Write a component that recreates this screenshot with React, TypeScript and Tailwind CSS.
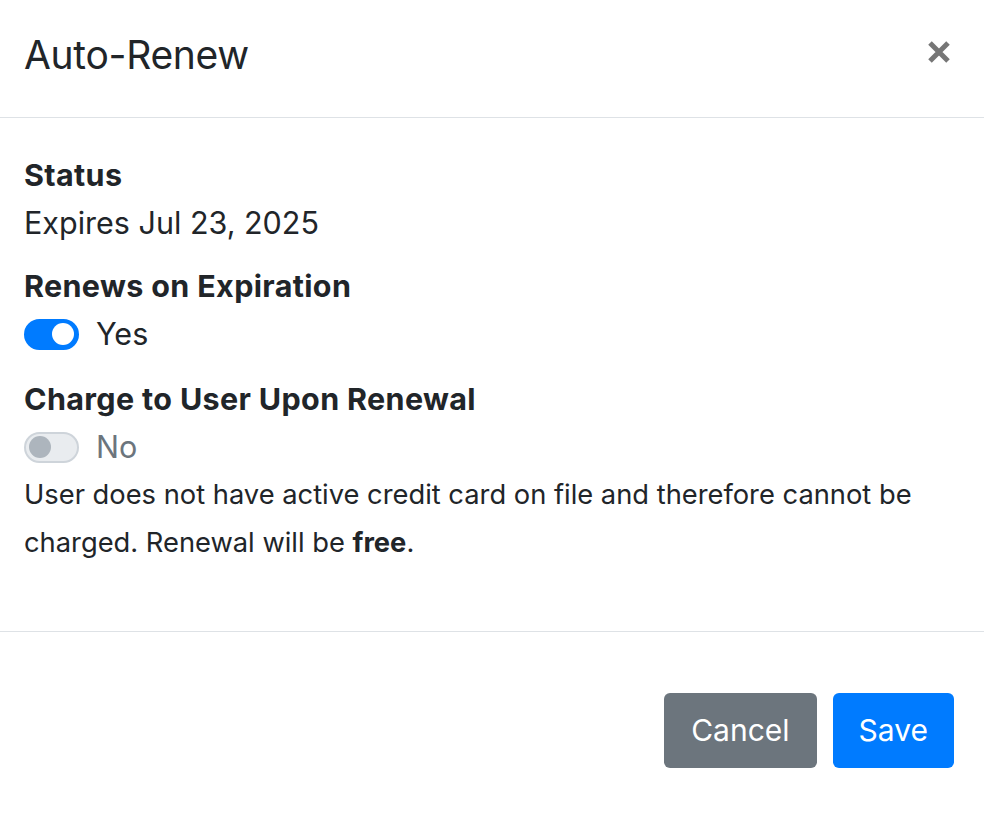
import { useState } from "react";

function Toggle({ on }: { on: boolean }) {
  return (
    <span
      className={`relative inline-flex items-center w-[55px] h-[31px] rounded-full border-2 ${
        on ? "bg-[#007bff] border-[#007bff]" : "bg-[#e9ecef] border-[#ced4da]"
      }`}
    >
      <span
        className={`absolute top-1/2 -translate-y-1/2 rounded-full w-[22px] h-[22px] ${
          on ? "right-[3px] bg-white" : "left-[3px] bg-[#adb5bd]"
        }`}
      ></span>
    </span>
  );
}

export default function App() {
  const [renews] = useState(true);
  const [charge] = useState(false);

  return (
    <div
      className="w-[984px] h-[822px] bg-white text-[#212529] overflow-hidden"
      style={{ fontFamily: "Inter, 'Noto Sans', sans-serif" }}
    >
      {/* Header */}
      <div className="flex items-start justify-between h-[118px] pl-6 pr-[33px] pt-[25px] border-b border-[#dee2e6]">
        <h5 className="text-[39px] leading-[60px] font-normal tracking-[-0.3px]">Auto-Renew</h5>
        <button className="mt-[15px] w-[24px] h-[24px] text-[#767676]" aria-label="Close">
          <svg viewBox="0 0 24 24" width="24" height="24">
            <path d="M3 3 L21 21 M21 3 L3 21" stroke="currentColor" strokeWidth="5" strokeLinecap="butt" />
          </svg>
        </button>
      </div>

      {/* Body */}
      <div className="px-6 pt-[33px] pb-[64px] text-[30.5px] leading-[48px]">
        <div className="font-bold tracking-[0.35px]">Status</div>
        <div className="mb-[15px]">Expires Jul 23, 2025</div>

        <div className="font-bold tracking-[0.35px]">Renews on Expiration</div>
        <div className="flex items-center gap-[17px] mb-[17px]">
          <Toggle on={renews} />
          <span>Yes</span>
        </div>

        <div className="font-bold tracking-[0.35px]">Charge to User Upon Renewal</div>
        <div className="flex items-center gap-[17px]">
          <Toggle on={charge} />
          <span className="text-[#6c757d]">No</span>
        </div>
        <p className="text-[27.3px] leading-[48px]">
          User does not have active credit card on file and therefore cannot be charged. Renewal will be{" "}
          <b>free</b>.
        </p>
      </div>

      {/* Footer */}
      <div className="flex justify-end gap-4 pr-[30px] pt-[61px] border-t border-[#dee2e6]">
        <button className="h-[75px] px-[27px] rounded-[6px] bg-[#6c757d] text-white text-[30px]">Cancel</button>
        <button className="h-[75px] px-[26px] rounded-[6px] bg-[#007bff] text-white text-[30px]">Save</button>
      </div>
    </div>
  );
}
